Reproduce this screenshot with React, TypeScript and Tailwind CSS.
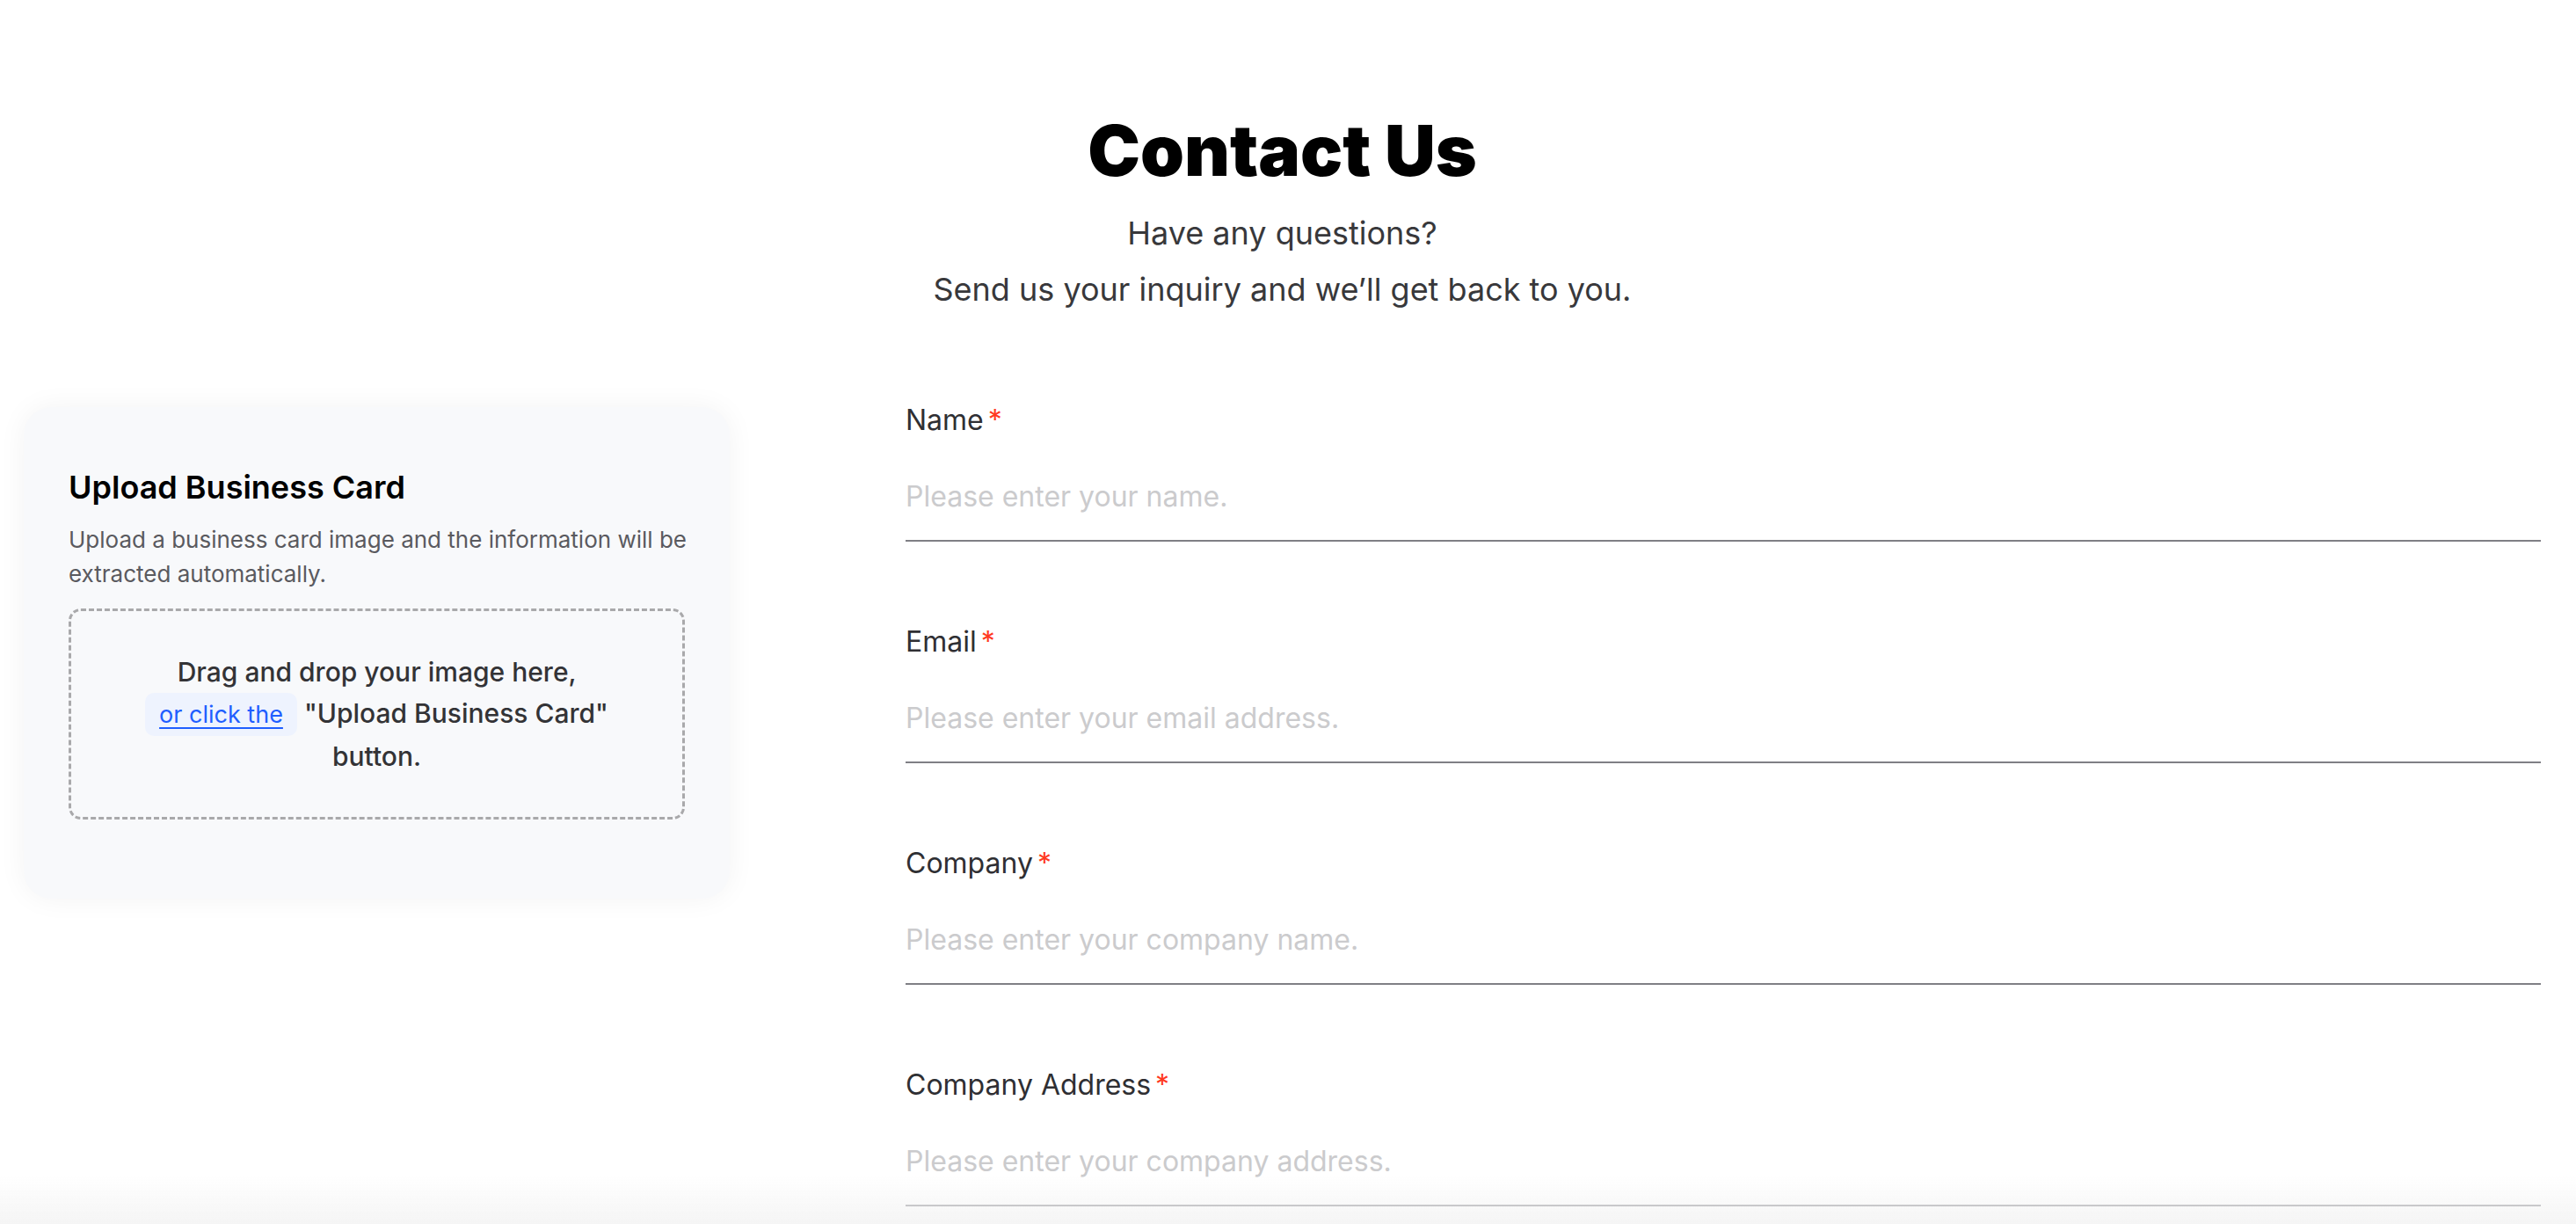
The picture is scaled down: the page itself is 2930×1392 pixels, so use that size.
import { useState } from "react";

const fields = [
  { id: "name", label: "Name", placeholder: "Please enter your name.", type: "text" },
  { id: "email", label: "Email", placeholder: "Please enter your email address.", type: "email" },
  { id: "company", label: "Company", placeholder: "Please enter your company name.", type: "text" },
  { id: "address", label: "Company Address", placeholder: "Please enter your company address.", type: "text" },
];

function UploadCard() {
  const [dragging, setDragging] = useState(false);

  return (
    <aside className="mt-[9px] w-[803px] shrink-0 rounded-[32px] bg-[#f8f9fb] px-[51px] pb-[90px] pt-[64px] shadow-[0_0_32px_rgba(0,0,0,0.05)]">
      <h2 className="text-[36px] font-semibold leading-[54px] text-black">Upload Business Card</h2>
      <p className="-mr-[14px] mt-[13px] text-[26px] leading-[39px] text-[#5a5a5f]">
        Upload a business card image and the information will be extracted automatically.
      </p>

      {/* drop zone */}
      <div
        onDragOver={(e) => {
          e.preventDefault();
          setDragging(true);
        }}
        onDragLeave={() => setDragging(false)}
        onDrop={(e) => {
          e.preventDefault();
          setDragging(false);
        }}
        className={`mt-[20px] flex h-[240px] items-center justify-center rounded-[14px] border-[3px] border-dashed ${
          dragging ? "border-[#1f5eff]" : "border-[#a9a9ab]"
        }`}
      >
        <p className="max-w-[560px] text-center text-[30px] font-medium leading-[47px] text-[#333336]">
          Drag and drop your image here,{" "}
          <button
            type="button"
            className="inline-block rounded-[10px] bg-[#eef3fe] px-[16px] py-[2px] text-[27px] font-normal leading-[45px] text-[#1f5eff] underline underline-offset-[5px]"
          >
            or click the
          </button>{" "}
          "Upload Business Card" button.
        </p>
      </div>
    </aside>
  );
}

export default function App() {
  return (
    <div className="min-h-screen bg-white pl-[27px] pr-[40px] pt-[123px] font-['Inter','Noto_Sans',sans-serif]">
      {/* header */}
      <header className="text-center">
        <h1 className="text-[80px] font-black leading-[96px] text-black">Contact Us</h1>
        <p className="mt-[14px] text-[36px] leading-[64px] text-[#38383b]">
          Have any questions?
          <br />
          Send us your inquiry and we’ll get back to you.
        </p>
      </header>

      <div className="mt-[93px] flex items-start gap-[200px]">
        <UploadCard />

        <form className="flex flex-1 flex-col gap-[90px] pb-[120px]" onSubmit={(e) => e.preventDefault()}>
          {fields.map((f) => (
            <label key={f.id} className="flex flex-col">
              <span className="text-[32px] leading-[48px] text-[#2f2f33]">
                {f.label}
                <span className="ml-[5px] text-[#ff3a1f]">*</span>
              </span>
              <input
                type={f.type}
                name={f.id}
                placeholder={f.placeholder}
                className="h-[114px] border-b-2 border-[#7f7f85] bg-transparent pt-[13px] text-[32px] text-[#2f2f33] outline-none placeholder:text-[#cbcbcd]"
              />
            </label>
          ))}
        </form>
      </div>

      <div className="pointer-events-none fixed inset-x-0 bottom-0 h-[56px] bg-gradient-to-b from-transparent to-[#f5f5f5]" />
    </div>
  );
}
